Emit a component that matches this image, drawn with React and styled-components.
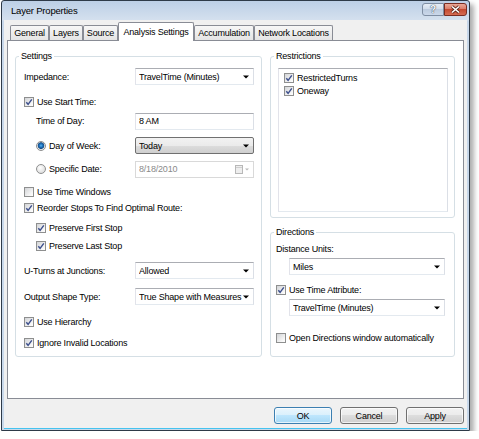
import React from 'react';
import styled, { createGlobalStyle } from 'styled-components';

const GlobalStyle = createGlobalStyle`
  html, body { margin: 0; padding: 0; background: #fff; }
  body {
    font-family: "Liberation Sans", Arial, sans-serif;
    font-size: 9px;
    letter-spacing: -0.2px;
    color: #000;
  }
  #root { padding-left: 1px; }
`;

const Window = styled.div`
  box-sizing: border-box;
  width: 469px;
  height: 431px;
  border: 1px solid #2e3a48;
  border-radius: 3px 3px 0 0;
  padding: 0 2px 1px;
  display: flex;
  flex-direction: column;
  background: linear-gradient(#bccfe6, #d4e0ee 19px, #c7d7ea 20px, #c9d9eb);
  box-shadow: 4px 4px 5px rgba(0, 0, 0, 0.32);
`;

const TitleBar = styled.div`
  height: 19px;
  display: flex;
  align-items: flex-start;
  padding-left: 7px;
`;

const Title = styled.span`
  flex: 1;
  font-size: 9.5px;
  line-height: 19px;
`;

const Caption = styled.div`
  display: flex;
  margin-top: 2px;
`;

const CaptionButton = styled.div`
  box-sizing: border-box;
  width: ${p => p.$w}px;
  height: 13px;
  display: flex;
  align-items: center;
  justify-content: center;
  border: 1px solid ${p => (p.$close ? '#7a2d22' : '#7f8ea3')};
  border-radius: ${p => (p.$close ? '0 3px 3px 0' : '3px 0 0 3px')};
  background: ${p =>
    p.$close
      ? 'linear-gradient(#eaa897, #d97864 50%, #c44a31 50%, #d56c53)'
      : 'linear-gradient(#e6edf6, #cfdbea 50%, #bccbdf 50%, #cbd8ea)'};
  color: #f7f9fc;
  font-weight: bold;
  font-size: 10px;
  text-shadow: 0 0 1px #38475c, 0 0 1px #38475c;
`;

const Client = styled.div`
  flex: 1;
  display: flex;
  flex-direction: column;
  background: #f0f0f0;
  padding: 2px 3px 0;
  border-bottom: 1px solid #45c3ef;
`;

const TabRow = styled.div`
  height: 18px;
  display: flex;
  align-items: flex-end;
  padding-left: 3px;
`;

const Tab = styled.div`
  box-sizing: border-box;
  width: ${p => p.$w}px;
  height: ${p => (p.$active ? 19 : 15)}px;
  margin-bottom: ${p => (p.$active ? -1 : 0)}px;
  border: 1px solid #898c95;
  border-bottom: none;
  border-radius: 2px 2px 0 0;
  background: ${p => (p.$active ? '#fff' : 'linear-gradient(#f7f7f7, #e4e4e4)')};
  display: flex;
  align-items: center;
  justify-content: center;
  white-space: nowrap;
  position: relative;
  z-index: ${p => (p.$active ? 1 : 0)};
`;

const Panel = styled.div`
  box-sizing: border-box;
  height: 359px;
  border: 1px solid #898c95;
  background: #fff;
  display: flex;
  align-items: flex-start;
  gap: 8px;
  padding: 10px 7px 0;
`;

const Group = styled.fieldset`
  box-sizing: border-box;
  width: ${p => p.$w}px;
  margin: 0;
  padding: 0;
  min-width: 0;
  border: 1px solid #d5dfe5;
  border-radius: 3px;
`;

const Legend = styled.legend`
  margin-left: 3px;
  padding: 0 2px;
  height: 11px;
  line-height: 11px;
`;

const GroupBody = styled.div`
  display: flex;
  flex-direction: column;
  padding: ${p => p.$pad};
`;

const Column = styled.div`
  display: flex;
  flex-direction: column;
  gap: 9px;
`;

const Row = styled.div`
  display: flex;
  align-items: center;
  height: ${p => p.$h || 12}px;
  margin-top: ${p => p.$mt || 0}px;
  padding-left: ${p => p.$indent || 0}px;
  white-space: nowrap;
`;

const Label = styled.span`
  flex: 1;
  color: ${p => (p.$dim ? '#8a8a8a' : '#000')};
`;

const Box = styled.span`
  box-sizing: border-box;
  width: 10px;
  height: 10px;
  margin-right: 3px;
  flex: none;
  border: 1px solid #8e8f8f;
  background: linear-gradient(135deg, #d2d4d7, #f4f4f4 70%, #fff);
  display: flex;
  align-items: center;
  justify-content: center;
`;

const Radio = styled.span`
  box-sizing: border-box;
  width: 10px;
  height: 10px;
  margin-right: 3px;
  flex: none;
  border-radius: 50%;
  border: 1px solid #8e8f8f;
  background: ${p =>
    p.$on
      ? 'radial-gradient(circle at 50% 45%, #5ab4f0 0, #1f74c0 1.6px, #174e86 3px, #d8dde2 3.6px, #f4f4f4 4.5px)'
      : 'radial-gradient(circle at 40% 35%, #fff, #d3d3d3)'};
`;

const Field = styled.div`
  box-sizing: border-box;
  width: ${p => p.$w || 119}px;
  height: ${p => p.$h || 17}px;
  margin-left: ${p => p.$ml || 0}px;
  flex: none;
  display: flex;
  align-items: center;
  padding: 0 3px 0 3px;
  border: 1px solid;
  border-color: ${p => (p.$disabled ? '#d9d9d9' : '#abadb3 #dbdfe6 #e3e9ef #e2e3ea')};
  border-radius: ${p => (p.$button ? 2 : 0)}px;
  ${p =>
    p.$button &&
    `border-color: #707070;
     background: linear-gradient(#f2f2f2, #ebebeb 50%, #dddddd 50%, #cfcfcf);`}
  color: ${p => (p.$disabled ? '#8a8a8a' : '#000')};
`;

const FieldText = styled.span`
  flex: 1;
  overflow: hidden;
`;

const ListBox = styled.div`
  box-sizing: border-box;
  height: 144px;
  padding: 2px 5px;
  border: 1px solid;
  border-color: #abadb3 #dbdfe6 #e3e9ef #e2e3ea;
  display: flex;
  flex-direction: column;
`;

const ListItem = styled.div`
  height: 13.5px;
  display: flex;
  align-items: center;
`;

const ButtonRow = styled.div`
  display: flex;
  justify-content: flex-end;
  gap: 8px;
  margin-top: 8px;
`;

const Button = styled.div`
  box-sizing: border-box;
  width: 58px;
  height: 17px;
  display: flex;
  align-items: center;
  justify-content: center;
  border-radius: 3px;
  border: 1px solid ${p => (p.$default ? '#3c7fb1' : '#707070')};
  background: ${p =>
    p.$default
      ? 'linear-gradient(#eaf6fd, #d9f0fc 50%, #bee6fd 50%, #a7d9f5)'
      : 'linear-gradient(#f2f2f2, #ebebeb 50%, #dddddd 50%, #cfcfcf)'};
  box-shadow: inset 0 0 0 1px rgba(255, 255, 255, 0.7);
`;

const Arrow = ({ color = '#000' }) => (
  <svg width="6" height="4" viewBox="0 0 6 4" style={{ marginRight: 1 }}>
    <polygon points="0,0.5 6,0.5 3,3.5" fill={color} />
  </svg>
);

const Check = ({ on }) => (
  <Box>
    {on && (
      <svg width="8" height="8" viewBox="0 0 8 8">
        <path d="M1.3 4.2 L3.1 6.3 L6.8 1.3" fill="none" stroke="#3c4f8c" strokeWidth="1.4" />
      </svg>
    )}
  </Box>
);

const CheckRow = ({ on, children, ...rest }) => (
  <Row {...rest}>
    <Check on={on} />
    <Label>{children}</Label>
  </Row>
);

const Select = ({ children, ...rest }) => (
  <Field {...rest}>
    <FieldText>{children}</FieldText>
    <Arrow />
  </Field>
);

const Calendar = () => (
  <svg width="15" height="9" viewBox="0 0 15 9">
    <rect x="0.5" y="0.5" width="7" height="8" fill="#eeeeee" stroke="#b8b8b8" />
    <line x1="1" y1="2.5" x2="7" y2="2.5" stroke="#cfcfcf" />
    <polygon points="10,3.5 14,3.5 12,5.5" fill="#b9b9b9" />
  </svg>
);

export default function App() {
  return (
    <>
      <GlobalStyle />
      <Window>
        <TitleBar>
          <Title>Layer Properties</Title>
          <Caption>
            <CaptionButton $w={22}>?</CaptionButton>
            <CaptionButton $w={23} $close>
              <svg width="11" height="9" viewBox="0 0 11 9">
                <path d="M2 1.5 L9 7.5 M9 1.5 L2 7.5" stroke="#5b2419" strokeWidth="3" />
                <path d="M2 1.5 L9 7.5 M9 1.5 L2 7.5" stroke="#fff" strokeWidth="1.6" />
              </svg>
            </CaptionButton>
          </Caption>
        </TitleBar>

        <Client>
          <TabRow>
            <Tab $w={39}>General</Tab>
            <Tab $w={34}>Layers</Tab>
            <Tab $w={35}>Source</Tab>
            <Tab $w={76} $active>Analysis Settings</Tab>
            <Tab $w={60}>Accumulation</Tab>
            <Tab $w={79}>Network Locations</Tab>
          </TabRow>

          <Panel>
            <Group $w={247}>
              <Legend>Settings</Legend>
              <GroupBody $pad="6px 7px 7px 8px">
                <Row $h={17}>
                  <Label>Impedance:</Label>
                  <Select>TravelTime (Minutes)</Select>
                </Row>
                <CheckRow on $mt={11}>Use Start Time:</CheckRow>
                <Row $h={18} $mt={4} $indent={12}>
                  <Label>Time of Day:</Label>
                  <Field>
                    <FieldText>8 AM</FieldText>
                  </Field>
                </Row>
                <Row $h={17} $mt={7} $indent={12}>
                  <Radio $on />
                  <Label>Day of Week:</Label>
                  <Select $button>Today</Select>
                </Row>
                <Row $h={16} $mt={7} $indent={12}>
                  <Radio />
                  <Label>Specific Date:</Label>
                  <Field $disabled>
                    <FieldText>8/18/2010</FieldText>
                    <Calendar />
                  </Field>
                </Row>
                <CheckRow $mt={9}>Use Time Windows</CheckRow>
                <CheckRow on $mt={4}>Reorder Stops To Find Optimal Route:</CheckRow>
                <CheckRow on $mt={8} $indent={12}>Preserve First Stop</CheckRow>
                <CheckRow on $mt={6} $indent={12}>Preserve Last Stop</CheckRow>
                <Row $h={17} $mt={10}>
                  <Label>U-Turns at Junctions:</Label>
                  <Select>Allowed</Select>
                </Row>
                <Row $h={17} $mt={9}>
                  <Label>Output Shape Type:</Label>
                  <Select>True Shape with Measures</Select>
                </Row>
                <CheckRow on $mt={11}>Use Hierarchy</CheckRow>
                <CheckRow on $mt={9}>Ignore Invalid Locations</CheckRow>
              </GroupBody>
            </Group>

            <Column>
              <Group $w={185}>
                <Legend>Restrictions</Legend>
                <GroupBody $pad="6px 6px 5px 7px">
                  <ListBox>
                    <ListItem>
                      <Check on />
                      <Label>RestrictedTurns</Label>
                    </ListItem>
                    <ListItem>
                      <Check on />
                      <Label>Oneway</Label>
                    </ListItem>
                  </ListBox>
                </GroupBody>
              </Group>

              <Group $w={185}>
                <Legend>Directions</Legend>
                <GroupBody $pad="5px 9px 12px 5px">
                  <Row>
                    <Label>Distance Units:</Label>
                  </Row>
                  <Row $h={17} $mt={3}>
                    <Select $w={156} $ml={13}>Miles</Select>
                  </Row>
                  <CheckRow on $mt={9}>Use Time Attribute:</CheckRow>
                  <Row $h={17} $mt={3}>
                    <Select $w={156} $ml={13}>TravelTime (Minutes)</Select>
                  </Row>
                  <CheckRow $mt={16}>Open Directions window automatically</CheckRow>
                </GroupBody>
              </Group>
            </Column>
          </Panel>

          <ButtonRow>
            <Button $default>OK</Button>
            <Button>Cancel</Button>
            <Button>Apply</Button>
          </ButtonRow>
        </Client>
      </Window>
    </>
  );
}
